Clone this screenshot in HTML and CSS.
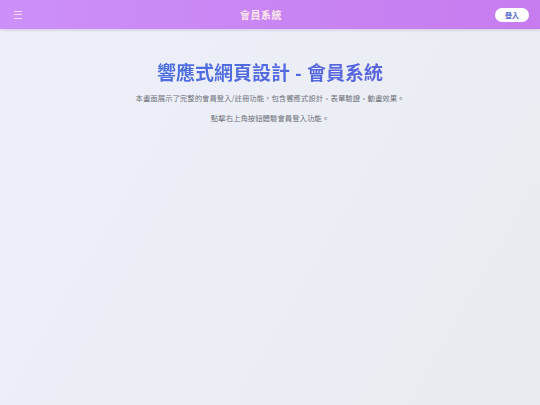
FILE: index.html
```html
<!DOCTYPE html>
<html lang="zh-Hant">
<head>
<meta charset="utf-8">
<title>會員系統</title>
<link rel="stylesheet" href="styles.css">
</head>
<body>
<header class="topbar">
  <button class="menu-btn" aria-label="menu"><span></span><span></span><span></span></button>
  <div class="brand">會員系統</div>
  <button class="login-btn">登入</button>
</header>
<main class="content">
  <h1 class="title">響應式網頁設計 - 會員系統</h1>
  <p class="desc">本畫面展示了完整的會員登入/註冊功能，包含響應式設計、表單驗證、動畫效果。</p>
  <p class="desc">點擊右上角按鈕體驗會員登入功能。</p>
</main>
</body>
</html>
```
FILE: styles.css
```css
* { box-sizing: border-box; }
html, body { height: 100%; }
body {
  margin: 0;
  font-family: "Noto Sans CJK TC", "Noto Sans", sans-serif;
  background: linear-gradient(120deg, #edf0fa 0%, #eceef6 50%, #e9ebf0 100%);
  min-height: 405px;
}
.topbar {
  height: 29px;
  display: flex;
  align-items: center;
  justify-content: space-between;
  padding: 0 11px 0 14px;
  background: linear-gradient(90deg, #cd90f8 0%, #c985f4 50%, #c67cef 100%);
  box-shadow: 0 1px 3px rgba(120, 80, 160, 0.25);
  position: relative;
}
.menu-btn {
  background: none;
  border: none;
  padding: 0;
  width: 8px;
  height: 8px;
  display: flex;
  flex-direction: column;
  justify-content: space-between;
  cursor: pointer;
}
.menu-btn span {
  display: block;
  height: 1px;
  width: 8px;
  background: #fbdcef;
}
.brand {
  position: absolute;
  left: 50%;
  transform: translateX(calc(-50% - 9px));
  color: #fbe6ea;
  font-size: 10px;
  font-weight: 700;
  letter-spacing: 0.5px;
}
.login-btn {
  width: 34px;
  height: 14px;
  border: none;
  border-radius: 7px;
  background: #ffffff;
  color: #5a6fd6;
  font-size: 7px;
  font-weight: 700;
  padding: 0;
  font-family: "Noto Sans CJK TC", sans-serif;
}
.content {
  text-align: center;
  padding-top: 32px;
}
.title {
  margin: 0 0 5px;
  font-size: 19px;
  font-weight: 700;
  line-height: 26px;
  font-family: "Liberation Sans", "Noto Sans CJK TC", sans-serif;
  background: linear-gradient(90deg, #4c6fe0, #5a64df);
  -webkit-background-clip: text;
  background-clip: text;
  color: transparent;
  display: inline-block;
}
.desc {
  margin: 0 0 9px;
  font-size: 7.4px;
  line-height: 11px;
  color: #70727a;
}
```
